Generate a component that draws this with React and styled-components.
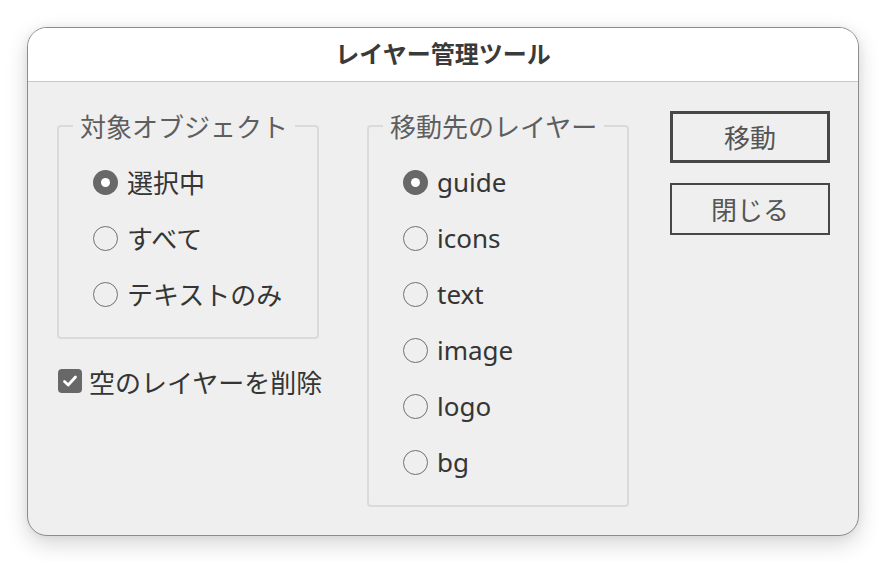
import React from "react";
import styled, { createGlobalStyle } from "styled-components";

const Global = createGlobalStyle`
  html, body { margin: 0; padding: 0; background: #ffffff; }
  body { font-family: "Noto Sans", "Noto Sans CJK JP", sans-serif; }
`;

const Page = styled.div`
  padding: 27px 28px 28px 27px;
  box-sizing: border-box;
  width: 887px;
  height: 563px;
`;

const Window = styled.div`
  width: 832px;
  height: 509px;
  box-sizing: border-box;
  border: 1px solid #8c8c8c;
  border-radius: 20px;
  background: #efefef;
  overflow: hidden;
  box-shadow: 0 8px 22px rgba(0, 0, 0, 0.16), 0 0 8px rgba(0, 0, 0, 0.06);
  display: flex;
  flex-direction: column;
`;

const TitleBar = styled.div`
  height: 54px;
  box-sizing: border-box;
  padding-bottom: 5px;
  background: #ffffff;
  border-bottom: 1px solid #c9c9c9;
  display: flex;
  align-items: center;
  justify-content: center;
  font-family: "Noto Sans CJK JP", sans-serif;
  font-weight: 700;
  font-size: 24px;
  color: #3a3a3a;
`;

const Body = styled.div`
  display: flex;
  align-items: flex-start;
  padding: 28px 0 0 29px;
`;

const Column = styled.div`
  display: flex;
  flex-direction: column;
  width: ${(p) => p.$w}px;
  margin-right: ${(p) => p.$mr || 0}px;
  flex: none;
`;

const Group = styled.fieldset`
  margin: 0;
  padding: 0 0 15px 0;
  border: 2px solid #dadada;
  border-radius: 4px;
  min-inline-size: 0;
`;

const Legend = styled.legend`
  margin-left: 14px;
  padding: 0 7px;
  font-family: "Noto Sans CJK JP", sans-serif;
  font-size: 26px;
  line-height: 32px;
  color: #5e5e5e;
`;

const List = styled.div`
  display: flex;
  flex-direction: column;
  padding-top: 12px;
`;

const Row = styled.label`
  display: flex;
  align-items: center;
  gap: 9px;
  height: 56px;
  padding-left: 34px;
  font-size: 26px;
  color: #353535;
  white-space: nowrap;
`;

const Radio = styled.span`
  width: 25px;
  height: 25px;
  box-sizing: border-box;
  border-radius: 50%;
  flex: none;
  display: flex;
  align-items: center;
  justify-content: center;
  border: ${(p) => (p.$on ? "none" : "1.8px solid #707070")};
  background: ${(p) => (p.$on ? "#686868" : "transparent")};
  &::after {
    content: "";
    display: ${(p) => (p.$on ? "block" : "none")};
    width: 9px;
    height: 9px;
    border-radius: 50%;
    background: #ffffff;
  }
`;

const CheckRow = styled.label`
  display: flex;
  align-items: center;
  gap: 7px;
  height: 56px;
  margin-top: 14px;
  padding-left: 1px;
  font-family: "Noto Sans CJK JP", sans-serif;
  font-size: 26px;
  color: #353535;
  white-space: nowrap;
`;

const CheckBox = styled.span`
  width: 24px;
  height: 24px;
  border-radius: 4px;
  background: #686868;
  flex: none;
  display: flex;
  align-items: center;
  justify-content: center;
`;

const Buttons = styled.div`
  display: flex;
  flex-direction: column;
  gap: 20px;
  padding-top: 1px;
  width: 160px;
  flex: none;
`;

const Button = styled.button`
  width: 160px;
  height: 52px;
  box-sizing: border-box;
  background: transparent;
  border: ${(p) => (p.$primary ? 3 : 2)}px solid #474747;
  border-radius: 0;
  font-family: "Noto Sans CJK JP", sans-serif;
  font-size: 26px;
  color: #555555;
  padding: 0 0 2px 0;
  display: flex;
  align-items: center;
  justify-content: center;
`;

const objectOptions = [
  { label: "選択中", on: true },
  { label: "すべて" },
  { label: "テキストのみ" },
];

const layerOptions = [
  { label: "guide", on: true },
  { label: "icons" },
  { label: "text" },
  { label: "image" },
  { label: "logo" },
  { label: "bg" },
];

function RadioGroup({ title, items }) {
  return (
    <Group>
      <Legend>{title}</Legend>
      <List>
        {items.map((it) => (
          <Row key={it.label}>
            <Radio $on={it.on} />
            <span>{it.label}</span>
          </Row>
        ))}
      </List>
    </Group>
  );
}

export default function App() {
  return (
    <>
      <Global />
      <Page>
        <Window>
          <TitleBar>レイヤー管理ツール</TitleBar>
          <Body>
            <Column $w={262} $mr={48}>
              <RadioGroup title="対象オブジェクト" items={objectOptions} />
              <CheckRow>
                <CheckBox>
                  <svg width="20" height="20" viewBox="0 0 20 20">
                    <path
                      d="M4.5 10.5 L8.2 14 L15.5 6"
                      fill="none"
                      stroke="#ffffff"
                      strokeWidth="2.8"
                      strokeLinecap="round"
                      strokeLinejoin="round"
                    />
                  </svg>
                </CheckBox>
                <span>空のレイヤーを削除</span>
              </CheckRow>
            </Column>
            <Column $w={262} $mr={41}>
              <RadioGroup title="移動先のレイヤー" items={layerOptions} />
            </Column>
            <Buttons>
              <Button $primary>移動</Button>
              <Button>閉じる</Button>
            </Buttons>
          </Body>
        </Window>
      </Page>
    </>
  );
}
